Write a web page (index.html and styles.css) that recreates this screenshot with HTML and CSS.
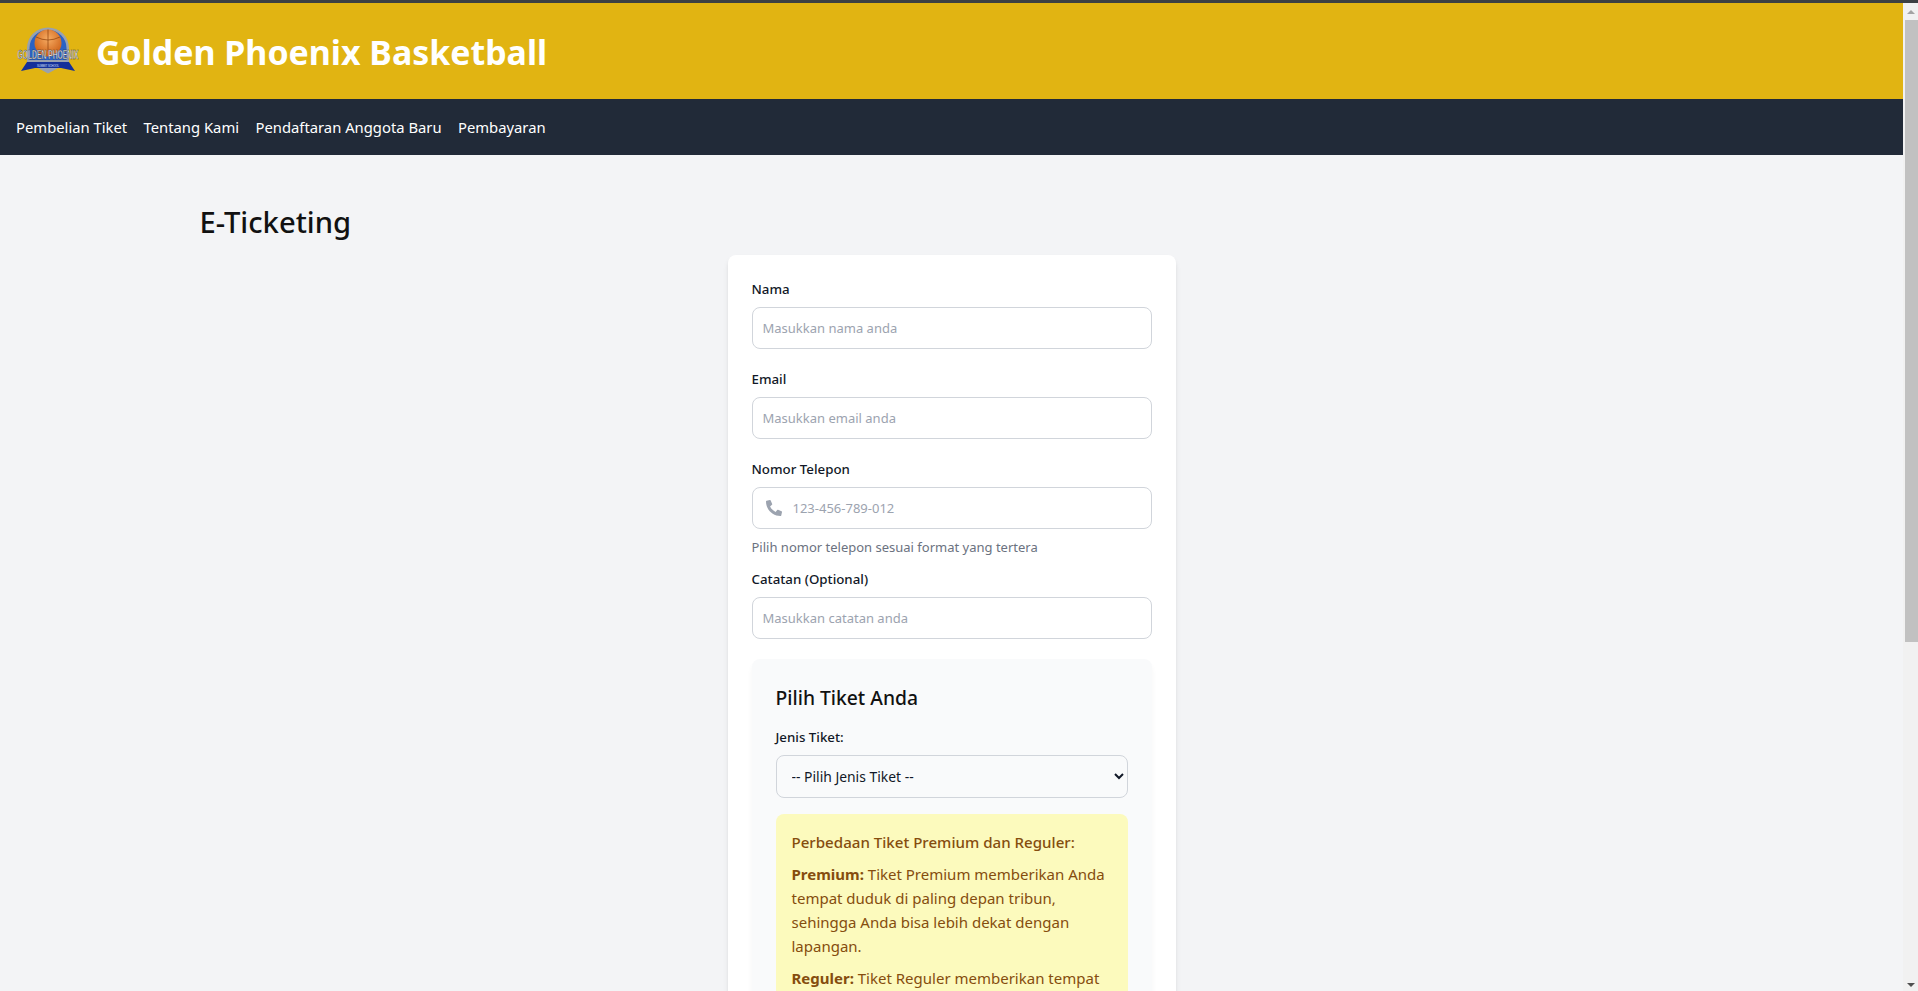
FILE: index.html
```html
<!DOCTYPE html>
<html lang="id">
<head>
    <meta charset="UTF-8">
    <meta name="viewport" content="width=device-width, initial-scale=1.0">
    <title>Golden Phoenix Basketball</title>
    <link rel="stylesheet" href="styles.css">
</head>
<body>
    <div class="topline"></div>
    <div class="window">
        <div class="page">
            <header class="site-header">
                <svg class="logo" viewBox="0 0 64 48" role="img" aria-label="Golden Phoenix">
                    <defs>
                        <radialGradient id="ball" cx=".5" cy=".35" r=".7">
                            <stop offset="0" stop-color="#f6ab62"/>
                            <stop offset="1" stop-color="#c9590f"/>
                        </radialGradient>
                    </defs>
                    <path d="M11 21a21 20.500 0 0 1 42 0v14l-21 11.500L11 35z" fill="#98a1b0"/>
                    <path d="M13.500 21a18.500 18 0 0 1 37 0v12h-37z" fill="#2a62c4"/>
                    <circle cx="32" cy="16" r="13.500" fill="url(#ball)"/>
                    <path d="M32 2.500v22M20 10q12 6 24 0" fill="none" stroke="#8a3d0a" stroke-width=".7"/>
                    <text class="logo-name" transform="translate(32 32) scale(1 1.6)" textLength="61" lengthAdjust="spacingAndGlyphs">GOLDEN PHOENIX</text>
                    <path d="M11 35h42l6 9-14-3H19L5 44z" fill="#14309a"/>
                    <text class="logo-sub" x="32" y="39.500" textLength="22" lengthAdjust="spacingAndGlyphs">SUMMIT SCHOOL</text>
                </svg>
                <h1 class="site-title">Golden Phoenix Basketball</h1>
            </header>
            <nav class="site-nav">
                <a href="#">Pembelian Tiket</a>
                <a href="#">Tentang Kami</a>
                <a href="#">Pendaftaran Anggota Baru</a>
                <a href="#">Pembayaran</a>
            </nav>

            <main class="content">
                <h2 class="page-title">E-Ticketing</h2>
                <form class="card">
                    <label class="field-label" for="nama">Nama</label>
                    <input class="text-input" type="text" id="nama" placeholder="Masukkan nama anda">

                    <label class="field-label" for="email">Email</label>
                    <input class="text-input" type="email" id="email" placeholder="Masukkan email anda">

                    <label class="field-label" for="telepon">Nomor Telepon</label>
                    <div class="phone-wrap">
                        <svg class="phone-icon" viewBox="0 0 512 512"><path d="M497.39 361.8l-112-48a24 24 0 0 0-28 6.9l-49.6 60.6A370.66 370.66 0 0 1 130.6 204.11l60.6-49.6a23.94 23.94 0 0 0 6.9-28l-48-112A24.16 24.16 0 0 0 122.6.61l-104 24A24 24 0 0 0 0 48c0 256.5 207.9 464 464 464a24 24 0 0 0 23.4-18.6l24-104a24.29 24.29 0 0 0-14.01-27.6z"/></svg>
                        <input class="text-input phone-input" type="tel" id="telepon" placeholder="123-456-789-012">
                    </div>
                    <p class="help-text">Pilih nomor telepon sesuai format yang tertera</p>

                    <label class="field-label" for="catatan">Catatan (Optional)</label>
                    <input class="text-input" type="text" id="catatan" placeholder="Masukkan catatan anda">

                    <section class="ticket-panel">
                        <h3 class="panel-title">Pilih Tiket Anda</h3>
                        <label class="field-label" for="jenis">Jenis Tiket:</label>
                        <select class="select-input" id="jenis">
                            <option>-- Pilih Jenis Tiket --</option>
                            <option>Premium</option>
                            <option>Reguler</option>
                        </select>
                        <div class="info-box">
                            <h4 class="info-title">Perbedaan Tiket Premium dan Reguler:</h4>
                            <p class="info-text"><strong>Premium:</strong> Tiket Premium memberikan Anda tempat duduk di paling depan tribun, sehingga Anda bisa lebih dekat dengan lapangan.</p>
                            <p class="info-text"><strong>Reguler:</strong> Tiket Reguler memberikan tempat</p>
                        </div>
                    </section>
                </form>
            </main>
        </div>

        <div class="scrollbar">
            <span class="arrow arrow-up"></span>
            <div class="track"><div class="thumb"></div></div>
            <span class="arrow arrow-down"></span>
        </div>
    </div>
</body>
</html>
```

FILE: styles.css
```css
* {
    box-sizing: border-box;
}

html,
body {
    height: 100%;
    margin: 0;
    overflow: hidden;
}

body {
    display: flex;
    flex-direction: column;
    background-color: #f3f4f6;
    color: #111827;
    font-family: "Noto Sans", "Open Sans", sans-serif;
}

.topline {
    height: 3px;
    flex: none;
    background-color: #3c4043;
}

.window {
    display: flex;
    flex: 1;
    min-height: 0;
}

.page {
    flex: 1;
    min-width: 0;
    overflow: hidden;
}

/* header */
.site-header {
    display: flex;
    align-items: center;
    gap: 16px;
    height: 96px;
    padding: 0 16px;
    background-color: #e1b412;
}

.logo {
    width: 64px;
    height: 48px;
    flex: none;
    overflow: visible;
}

.logo-name {
    font-family: "Liberation Sans", sans-serif;
    font-size: 8px;
    font-weight: 700;
    fill: #dcdfe3;
    stroke: #2c3036;
    stroke-width: .25px;
    text-anchor: middle;
}

.logo-sub {
    font-family: "Liberation Sans", sans-serif;
    font-size: 3px;
    fill: #dfe6ff;
    text-anchor: middle;
}

.site-title {
    margin: 2px 0 0;
    color: white;
    font-size: 33.900px;
    font-weight: 700;
    line-height: 40px;
}

.site-nav {
    display: flex;
    align-items: center;
    gap: 16.400px;
    height: 56px;
    padding: 0 16px;
    background-color: #212a38;
}

.site-nav a {
    color: white;
    font-size: 14.800px;
    text-decoration: none;
}

/* main */
.content {
    max-width: 1504px;
    margin: 0 auto;
    padding-top: 49px;
}

.page-title {
    margin: 0 0 15px;
    color: #111;
    font-size: 29.200px;
    font-weight: 500;
    line-height: 36px;
}

.card {
    width: 448px;
    margin: 0 auto;
    padding: 24px;
    background-color: white;
    border-radius: 8px;
    box-shadow: 0 4px 6px -1px rgba(0, 0, 0, .1), 0 2px 4px -2px rgba(0, 0, 0, .1);
}

.field-label {
    display: block;
    margin-bottom: 8px;
    font-size: 13.300px;
    font-weight: 500;
    line-height: 20px;
}

.text-input {
    display: block;
    width: 100%;
    height: 42px;
    margin-bottom: 20px;
    padding: 0 10px;
    border: 1px solid #d1d5db;
    border-radius: 8px;
    background-color: white;
    font-family: inherit;
    font-size: 13px;
}

.text-input::placeholder {
    color: #9ca3af;
    opacity: 1;
}

.phone-wrap {
    position: relative;
}

.phone-icon {
    position: absolute;
    left: 14px;
    top: 13px;
    width: 16px;
    height: 16px;
    fill: #9ca3af;
}

.phone-input {
    margin-bottom: 0;
    padding-left: 40px;
}

.help-text {
    margin: 8px 0 12px;
    color: #6b7280;
    font-size: 13px;
    line-height: 20px;
}

.ticket-panel {
    padding: 24px;
    background-color: #f9fafb;
    border-radius: 8px;
    box-shadow: 0 4px 6px -1px rgba(0, 0, 0, .06);
}

.panel-title {
    margin: 1px 0 15px;
    color: #111;
    font-size: 19.300px;
    font-weight: 500;
    line-height: 28px;
}

.select-input {
    display: block;
    width: 100%;
    height: 43px;
    padding: 0 11px;
    border: 1px solid #d1d5db;
    border-radius: 8px;
    background-color: #f9fafb;
    color: #111827;
    font-family: inherit;
    font-size: 13.900px;
}

.info-box {
    margin-top: 16px;
    padding: 16px;
    background-color: #fcfabd;
    border-radius: 8px;
    color: #854d0e;
}

.info-title {
    margin: 0 0 8px;
    font-size: 15.100px;
    font-weight: 500;
    line-height: 24px;
}

.info-text {
    margin: 0 0 8px;
    font-size: 15px;
    line-height: 24px;
}

/* browser scrollbar, drawn so it shows in the picture */
.scrollbar {
    display: flex;
    flex-direction: column;
    align-items: center;
    width: 15px;
    flex: none;
    background-color: #f1f1f1;
}

.arrow {
    flex: none;
    width: 0;
    height: 0;
    border-left: 4px solid transparent;
    border-right: 4px solid transparent;
}

.arrow-up {
    margin: 7px 0 3px;
    border-bottom: 4px solid #a3a3a3;
}

.arrow-down {
    margin: 6px 0 4px;
    border-top: 4px solid #505050;
}

.track {
    flex: 1;
    width: 100%;
    padding: 3px 0 0 2px;
}

.thumb {
    height: 622px;
    background-color: #c1c1c1;
}
```
